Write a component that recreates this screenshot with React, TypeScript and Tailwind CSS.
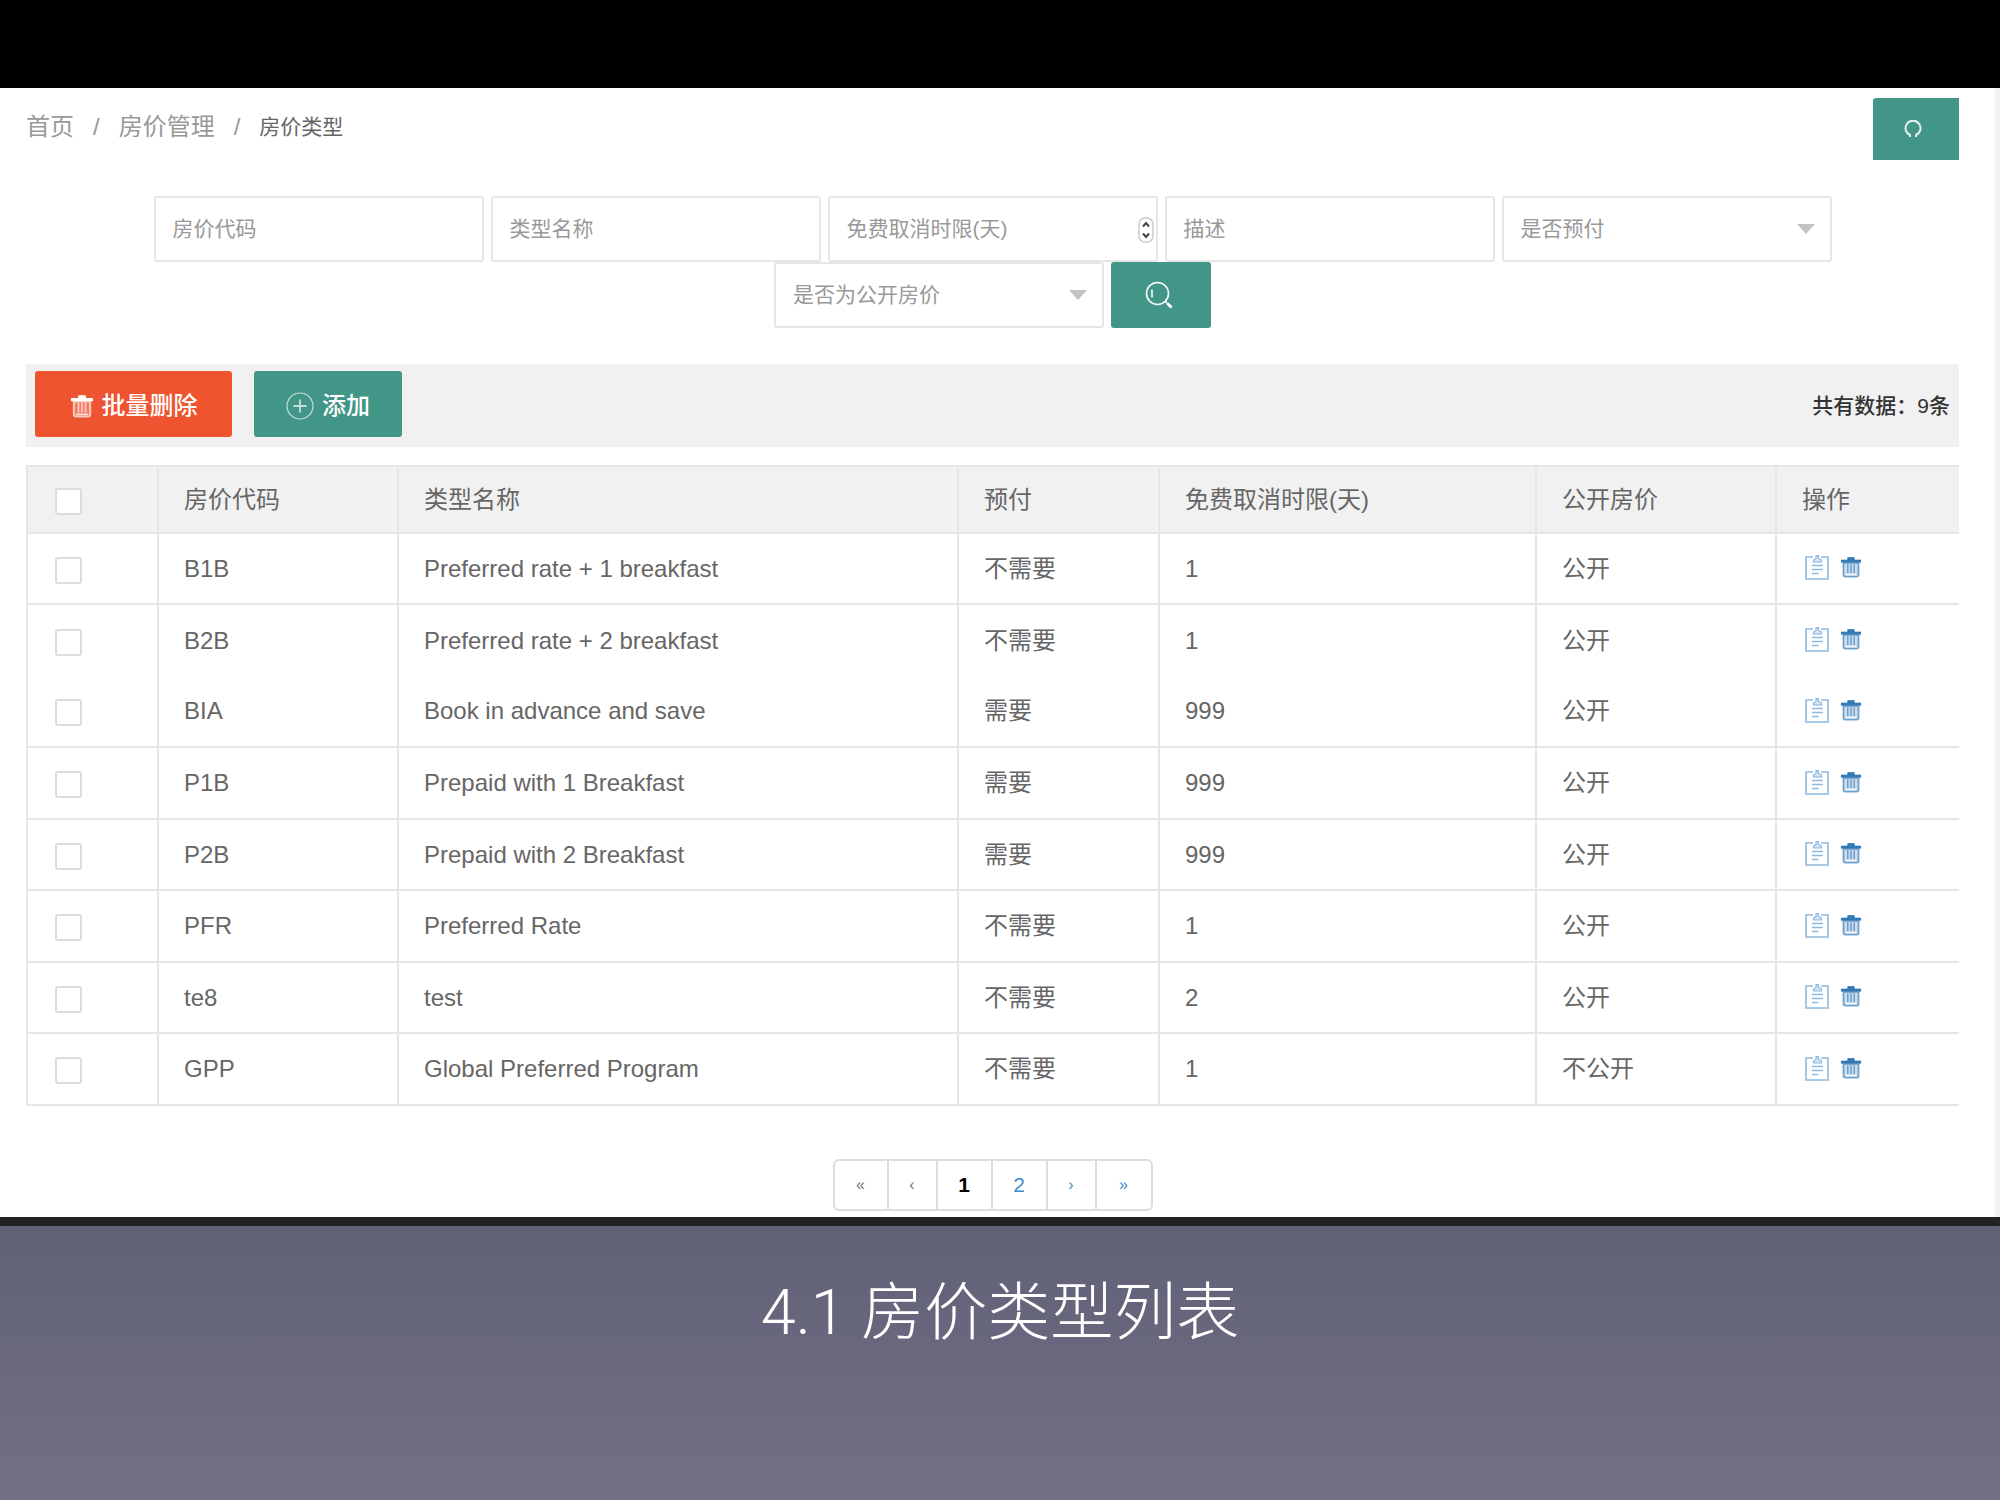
import type { ReactNode } from "react";

const rates = [
  { code: "B1B", name: "Preferred rate + 1 breakfast", prepaid: "不需要", days: 1, open: "公开" },
  { code: "B2B", name: "Preferred rate + 2 breakfast", prepaid: "不需要", days: 1, open: "公开" },
  { code: "BIA", name: "Book in advance and save", prepaid: "需要", days: 999, open: "公开" },
  { code: "P1B", name: "Prepaid with 1 Breakfast", prepaid: "需要", days: 999, open: "公开" },
  { code: "P2B", name: "Prepaid with 2 Breakfast", prepaid: "需要", days: 999, open: "公开" },
  { code: "PFR", name: "Preferred Rate", prepaid: "不需要", days: 1, open: "公开" },
  { code: "te8", name: "test", prepaid: "不需要", days: 2, open: "公开" },
  { code: "GPP", name: "Global Preferred Program", prepaid: "不需要", days: 1, open: "不公开" },
];

const checkbox =
  "mt-[3px] ml-[2px] block h-[27px] w-[27px] appearance-none rounded-[3px] border-2 border-[#dcdcdc] bg-white checked:bg-[#429687]";

const field =
  "h-[66px] w-full appearance-none rounded-[3px] border-2 border-[#e6e6e6] bg-white px-[17px] text-[21px] text-[#999] outline-none placeholder:text-[#999]";

function TrashIcon({ className }: { className?: string }) {
  return (
    <svg viewBox="0 0 24 24" className={className} fill="none" stroke="currentColor" aria-hidden="true">
      <path d="M8.5 1.8h7v3h-7z" fill="currentColor" strokeWidth="1" />
      <path d="M1 5.6h22" strokeWidth="3.2" />
      <path d="M3.8 7.500v13a2 2 0 0 0 2 2h12.400a2 2 0 0 0 2-2v-13z" fill="currentColor" fillOpacity="0.25" strokeWidth="2" strokeOpacity="0.65" />
      <path d="M8.500 9v9.500M12 9v9.500M15.500 9v9.500" strokeWidth="1.600" strokeOpacity="0.65" />
      <path d="M6 20.300h12" stroke="white" strokeWidth="1.400" strokeOpacity="0.800" />
    </svg>
  );
}

function EditIcon({ className }: { className?: string }) {
  return (
    <svg viewBox="0 0 24 26" className={className} fill="none" stroke="currentColor" strokeWidth="1.600" strokeOpacity="0.600" aria-hidden="true">
      <path d="M8 3H1v22h22V3h-7" />
      <path d="M8.500 8V6l2.500-1.500V1.500h2.500v3L16.500 6v2z" fill="currentColor" fillOpacity="0.200" strokeWidth="1.200" />
      <path d="M7 11.500h11M7 15.500h11M7 19.500h6.500" />
    </svg>
  );
}

function SelectField({ label }: { label: string }) {
  return (
    <div className="relative w-[330px]">
      <select aria-label={label} className={field}>
        <option>{label}</option>
      </select>
      <svg viewBox="0 0 18 10" className="pointer-events-none absolute top-7 right-[17px] h-[10px] w-[18px]" aria-hidden="true">
        <path d="M0 0h18l-9 10z" fill="#c2c2c2" />
      </svg>
    </div>
  );
}

function Th({ children }: { children: ReactNode }) {
  return (
    <th className="border-2 border-[#e6e6e6] px-[25px] text-left font-normal last:border-r-0">{children}</th>
  );
}

function Td({ children }: { children: ReactNode }) {
  return <td className="border-x-2 border-[#e6e6e6] px-[25px] last:border-r-0">{children}</td>;
}

export default function App() {
  return (
    <div className="flex min-h-screen flex-col bg-black pt-[88px] font-['Liberation_Sans','Noto_Sans_CJK_SC',sans-serif]">
      <main className="border-r-[5px] border-[#f2f2f2] bg-white pr-9 pb-[6px] pl-[26px]">
        <header className="flex items-start justify-between pt-[10px]">
          <nav aria-label="breadcrumb" className="flex items-center pt-[11px] text-2xl leading-9 text-[#999]">
            <a href="#home">首页</a>
            <span className="px-[19px]">/</span>
            <a href="#rates">房价管理</a>
            <span className="px-[19px]">/</span>
            <span className="text-[21px] text-[#666]">房价类型</span>
          </nav>
          <button
            type="button"
            aria-label="刷新"
            className="flex h-[62px] w-[86px] items-center justify-center rounded-tl-[3px] bg-[#429687] pr-[6px] text-white"
          >
            <svg viewBox="0 0 18 18" className="h-[18px] w-[18px]" fill="none" stroke="currentColor" strokeWidth="2" strokeOpacity="0.850" aria-hidden="true">
              <path d="M6 17V15A7.500 7.500 0 1 1 12 15V17" />
            </svg>
          </button>
        </header>

        <form className="flex flex-wrap justify-center gap-x-[7px] px-[120px] pt-9">
          <input aria-label="房价代码" placeholder="房价代码" className={field + " max-w-[330px]"} />
          <input aria-label="类型名称" placeholder="类型名称" className={field + " max-w-[330px]"} />
          <div className="relative w-[330px]">
            <input aria-label="免费取消时限(天)" placeholder="免费取消时限(天)" className={field} />
            <svg viewBox="0 0 16 26" className="absolute top-[21px] right-1 h-[26px] w-4" fill="none" aria-hidden="true">
              <rect x="1" y="1" width="14" height="24" rx="6" stroke="#ccc" strokeWidth="1.500" />
              <path d="M5 9.500l3-3.500 3 3.500M5 16.500l3 3.500 3-3.500" stroke="#444" strokeWidth="2" />
            </svg>
          </div>
          <input aria-label="描述" placeholder="描述" className={field + " max-w-[330px]"} />
          <SelectField label="是否预付" />
          <SelectField label="是否为公开房价" />
          <button
            type="button"
            aria-label="搜索"
            className="flex h-[66px] w-[100px] items-center justify-center rounded-[3px] bg-[#429687] pr-1 text-white"
          >
            <svg viewBox="0 0 28 28" className="h-7 w-7" fill="none" stroke="currentColor" strokeWidth="1.600" aria-hidden="true">
              <circle cx="12.500" cy="12.500" r="11" />
              <path d="M7 8.500v8" />
              <path d="M20.500 20.500l2 2" />
              <path d="M22.500 22.500l4 4" strokeWidth="3" />
            </svg>
          </button>
        </form>

        <div className="mt-9 flex items-center justify-between bg-[#f1f1f1] px-[9px] pt-[7px] pb-[10px]">
          <div className="flex gap-[22px] text-2xl font-medium text-white">
            <button type="button" className="flex h-[66px] w-[197px] items-center justify-center gap-2 rounded-[3px] bg-[#ee542f] pt-1">
              <TrashIcon className="h-6 w-6" />
              批量删除
            </button>
            <button type="button" className="flex h-[66px] w-[148px] items-center justify-center gap-2 rounded-[3px] bg-[#429687] pt-1">
              <svg viewBox="0 0 28 28" className="h-7 w-7" fill="none" stroke="currentColor" strokeWidth="1.200" strokeOpacity="0.700" aria-hidden="true">
                <circle cx="14" cy="14" r="13" />
                <path d="M14 7.500v13M7.500 14h13" strokeWidth="1.800" />
              </svg>
              添加
            </button>
          </div>
          <p className="pt-1 text-[21px] font-medium text-[#333]">共有数据：9条</p>
        </div>

        <table className="mt-[18px] w-full table-fixed border-collapse text-2xl text-[#666]">
          <colgroup>
            <col className="w-[131px]" />
            <col className="w-[240px]" />
            <col />
            <col className="w-[201px]" />
            <col className="w-[377px]" />
            <col className="w-[240px]" />
            <col className="w-[183px]" />
          </colgroup>
          <thead>
            <tr className="h-[67px] bg-[#f1f1f1]">
              <Th>
                <input type="checkbox" aria-label="全选" className={checkbox} />
              </Th>
              <Th>房价代码</Th>
              <Th>类型名称</Th>
              <Th>预付</Th>
              <Th>免费取消时限(天)</Th>
              <Th>公开房价</Th>
              <Th>操作</Th>
            </tr>
          </thead>
          <tbody>
            {rates.map((rate) => (
              <tr
                key={rate.code}
                className="border-b-2 border-[#e6e6e6] odd:h-[71px] even:h-[72px] nth-2:border-b-0"
              >
                <Td>
                  <input type="checkbox" aria-label={rate.code} className={checkbox} />
                </Td>
                <Td>{rate.code}</Td>
                <Td>{rate.name}</Td>
                <Td>{rate.prepaid}</Td>
                <Td>{rate.days}</Td>
                <Td>{rate.open}</Td>
                <Td>
                  <div className="flex items-center gap-[11px] pb-[3px] pl-[3px] text-[#337ab7]">
                    <button type="button" aria-label="编辑">
                      <EditIcon className="block h-[26px] w-6 text-[#428bca]" />
                    </button>
                    <button type="button" aria-label="删除">
                      <TrashIcon className="block h-[22px] w-[22px]" />
                    </button>
                  </div>
                </Td>
              </tr>
            ))}
          </tbody>
        </table>

        <nav aria-label="pagination" className="mt-[53px] flex justify-center">
          <ul className="flex h-[52px] divide-x-2 divide-[#ddd] rounded-md border-2 border-[#ddd] text-[21px] text-[#428bca]">
            <li className="flex w-[54px] items-center justify-center text-base text-[#777]"><a href="#first">«</a></li>
            <li className="flex w-[49px] items-center justify-center text-base text-[#777]"><a href="#prev">‹</a></li>
            <li className="flex w-[55px] items-center justify-center font-bold text-black"><a href="#1">1</a></li>
            <li className="flex w-[55px] items-center justify-center"><a href="#2">2</a></li>
            <li className="flex w-[49px] items-center justify-center text-base"><a href="#next">›</a></li>
            <li className="flex w-[54px] items-center justify-center text-base"><a href="#last">»</a></li>
          </ul>
        </nav>
      </main>

      <footer className="flex-1 border-t-[9px] border-[#222] bg-linear-to-b from-[#606077] to-[#727086] pt-[42px] text-center">
        <h1 className="font-['Roboto','Noto_Sans_CJK_SC',sans-serif] text-[63px] leading-[90px] font-light text-white">
          4.1 房价类型列表
        </h1>
      </footer>
    </div>
  );
}
